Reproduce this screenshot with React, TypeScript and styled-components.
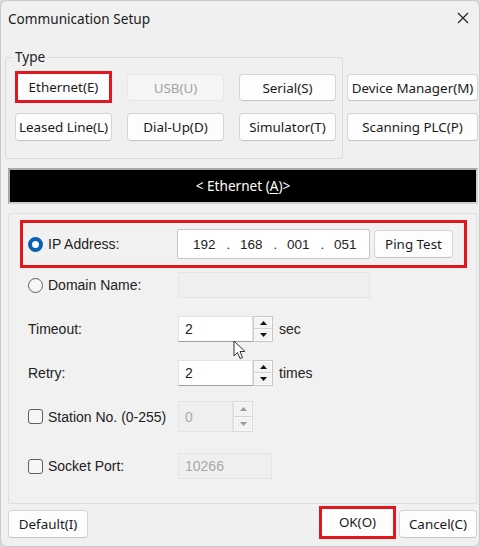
import React from "react";
import styled, { createGlobalStyle, css } from "styled-components";

const Global = createGlobalStyle`
  html, body { margin: 0; padding: 0; background: #d9d9d9; }
  body { width: 480px; height: 547px; overflow: hidden; }
  * { box-sizing: border-box; }
`;

const ui = `"Noto Sans", "Open Sans", sans-serif`;
const classic = `"Liberation Sans", Arial, sans-serif`;
const RED = "#e3161e";

const Window = styled.div`
  position: relative;
  width: 480px;
  height: 547px;
  background: #f0f0f0;
  border-radius: 7px;
  border: 1px solid #c9c9c9;
  display: flex;
  flex-direction: column;
  font-family: ${ui};
  color: #1a1a1a;
  overflow: hidden;
`;

const TitleBar = styled.div`
  height: 34px;
  display: flex;
  align-items: center;
  justify-content: space-between;
  padding: 0 6px 0 7px;
  font-size: 13.6px;
  color: #1b1b1b;
`;

const CloseBtn = styled.div`
  width: 20px;
  height: 20px;
  display: flex;
  align-items: center;
  justify-content: center;
`;

const TypeArea = styled.div`
  display: flex;
  align-items: flex-start;
  padding: 14px 0 0 4px;
  height: 124px;
`;

const GroupBox = styled.div`
  position: relative;
  width: 338px;
  height: 102px;
  margin-top: 8px;
  border: 1px solid #dcdcdc;
  border-radius: 3px;
  padding: 16px 0 0 9px;
  display: grid;
  grid-template-columns: 97px 97px 97px;
  grid-auto-rows: 27px;
  column-gap: 15px;
  row-gap: 12px;
`;

const GroupLegend = styled.span`
  position: absolute;
  top: -11px;
  left: 6px;
  padding: 0 3px;
  background: #f0f0f0;
  font-size: 13.6px;
  line-height: 20px;
  color: #222;
`;

const SideColumn = styled.div`
  display: flex;
  flex-direction: column;
  gap: 12px;
  margin: 25px 0 0 4px;
`;

const Button = styled.button<{ $w?: number; $h?: number; $hl?: boolean; $disabled?: boolean }>`
  width: ${(p) => (p.$w ? `${p.$w}px` : "100%")};
  height: ${(p) => p.$h ?? 27}px;
  padding: 0;
  background: #fdfdfd;
  border: 1px solid #d5d5d5;
  border-bottom-color: #c4c4c4;
  border-radius: 4px;
  font-family: ${ui};
  font-size: 13.4px;
  color: #1b1b1b;
  display: flex;
  align-items: center;
  justify-content: center;
  white-space: nowrap;
  ${(p) =>
    p.$disabled &&
    css`
      background: #f5f5f5;
      border-color: #e6e6e6;
      color: #a3a3a3;
    `}
  ${(p) =>
    p.$hl &&
    css`
      border: 3px solid ${RED};
      border-radius: 0;
      height: ${(p.$h ?? 27) + 5}px;
      margin-top: -3px;
    `}
`;

const Banner = styled.div`
  margin: 9px 1px 0 7px;
  height: 36px;
  background: #000;
  border: 2px solid #a8a8a8;
  border-right-color: #d0d0d0;
  border-bottom-color: #d0d0d0;
  display: flex;
  align-items: center;
  justify-content: center;
  color: #fff;
  font-size: 13.6px;
  padding-bottom: 1px;
`;

const Underline = styled.span`
  text-decoration: underline;
  text-underline-offset: 2px;
`;

const Panel = styled.div`
  margin: 9px 2px 0 7px;
  height: 291px;
  border: 1px solid #dedede;
  border-radius: 2px;
  background: #f1f1f1;
  padding: 6px 0 0 11px;
  display: flex;
  flex-direction: column;
`;

const HighlightRow = styled.div`
  width: 447px;
  height: 48px;
  border: 3px solid ${RED};
  display: flex;
  align-items: center;
  padding-left: 5px;
`;

const Row = styled.div<{ $top: number; $h?: number }>`
  display: flex;
  align-items: center;
  height: ${(p) => p.$h ?? 26}px;
  margin-top: ${(p) => p.$top}px;
  padding-left: 8px;
`;

const Label = styled.label<{ $w: number }>`
  width: ${(p) => p.$w}px;
  display: flex;
  align-items: center;
  gap: 5px;
  font-family: ${classic};
  font-size: 14px;
  color: #222;
  white-space: nowrap;
  flex-shrink: 0;
`;

const RadioMark = styled.span<{ $on?: boolean }>`
  width: 15px;
  height: 15px;
  border-radius: 50%;
  flex-shrink: 0;
  ${(p) =>
    p.$on
      ? css`
          border: 4px solid #0a5fb4;
          background: #fff;
        `
      : css`
          border: 1px solid #5f5f5f;
          background: #f6f6f6;
        `}
`;

const CheckMark = styled.span`
  width: 15px;
  height: 15px;
  border: 1px solid #5f5f5f;
  border-radius: 3px;
  background: #f6f6f6;
  flex-shrink: 0;
`;

const IpBox = styled.div`
  width: 193px;
  height: 30px;
  background: #fff;
  border: 1px solid #c4c4c4;
  border-radius: 2px;
  display: flex;
  align-items: center;
  padding-left: 15px;
  font-family: ${classic};
  font-size: 13.5px;
  color: #222;
`;

const Octet = styled.span`
  width: 26px;
  text-align: left;
`;

const Dot = styled.span`
  width: 21px;
  text-align: center;
  padding-right: 2px;
`;

const TextField = styled.div<{ $w: number; $h?: number; $disabled?: boolean }>`
  width: ${(p) => p.$w}px;
  height: ${(p) => p.$h ?? 26}px;
  background: ${(p) => (p.$disabled ? "#efefef" : "#fff")};
  border: 1px solid ${(p) => (p.$disabled ? "#e4e4e4" : "#e2e2e2")};
  border-bottom: 1px solid ${(p) => (p.$disabled ? "#e4e4e4" : "#a0a0a0")};
  display: flex;
  align-items: center;
  padding-left: 6px;
  font-family: ${classic};
  font-size: 14px;
  color: ${(p) => (p.$disabled ? "#a8a8a8" : "#222")};
  flex-shrink: 0;
`;

const Spinner = styled.div<{ $h: number; $disabled?: boolean }>`
  width: 20px;
  height: ${(p) => p.$h}px;
  display: flex;
  flex-direction: column;
  border: 1px solid ${(p) => (p.$disabled ? "#dcdcdc" : "#c8c8c8")};
  background: ${(p) => (p.$disabled ? "#f0f0f0" : "#ececec")};
  flex-shrink: 0;
`;

const SpinBtn = styled.div<{ $disabled?: boolean; $first?: boolean }>`
  flex: 1;
  display: flex;
  align-items: center;
  justify-content: center;
  background: ${(p) => (p.$disabled ? "#f2f2f2" : "#f3f3f3")};
  border: 1px solid ${(p) => (p.$disabled ? "#f8f8f8" : "#fbfbfb")};
  ${(p) => p.$first && css`border-bottom-color: #d0d0d0;`}
`;

const Unit = styled.span`
  margin-left: 6px;
  font-family: ${classic};
  font-size: 14px;
  color: #222;
`;

const Footer = styled.div`
  flex: 1;
  display: flex;
  align-items: center;
  padding: 0 2px 3px 7px;
`;

const Spacer = styled.div`
  flex: 1;
`;

const FooterRight = styled.div`
  display: flex;
  align-items: center;
  gap: 3px;
`;

const Cursor = styled.svg`
  position: absolute;
  left: 232px;
  top: 339px;
`;

function Tri({ up, color }: { up?: boolean; color: string }) {
  return (
    <svg width="7" height="4" viewBox="0 0 7 4">
      <path d={up ? "M0 4 L3.5 0 L7 4 Z" : "M0 0 L3.5 4 L7 0 Z"} fill={color} />
    </svg>
  );
}

function Spin({ h, disabled }: { h: number; disabled?: boolean }) {
  const c = disabled ? "#9a9a9a" : "#111";
  return (
    <Spinner $h={h} $disabled={disabled}>
      <SpinBtn $first $disabled={disabled}>
        <Tri up color={c} />
      </SpinBtn>
      <SpinBtn $disabled={disabled}>
        <Tri color={c} />
      </SpinBtn>
    </Spinner>
  );
}

export default function App() {
  return (
    <>
      <Global />
      <Window>
        <TitleBar>
          <span>Communication Setup</span>
          <CloseBtn>
            <svg width="12" height="12" viewBox="0 0 12 12">
              <path d="M1 1 L11 11 M11 1 L1 11" stroke="#222" strokeWidth="1.2" />
            </svg>
          </CloseBtn>
        </TitleBar>

        <TypeArea>
          <GroupBox>
            <GroupLegend>Type</GroupLegend>
            <Button $hl>Ethernet(E)</Button>
            <Button $disabled>USB(U)</Button>
            <Button>Serial(S)</Button>
            <Button $h={28}>Leased Line(L)</Button>
            <Button $h={28}>Dial-Up(D)</Button>
            <Button $h={28}>Simulator(T)</Button>
          </GroupBox>
          <SideColumn>
            <Button $w={131}>Device Manager(M)</Button>
            <Button $w={131} $h={28}>Scanning PLC(P)</Button>
          </SideColumn>
        </TypeArea>

        <Banner>
          &lt; Ethernet (<Underline>A</Underline>)&gt;
        </Banner>

        <Panel>
          <HighlightRow>
            <Label $w={149}>
              <RadioMark $on />
              IP Address:
            </Label>
            <IpBox>
              <Octet>192</Octet>
              <Dot>.</Dot>
              <Octet>168</Octet>
              <Dot>.</Dot>
              <Octet>001</Octet>
              <Dot>.</Dot>
              <Octet>051</Octet>
            </IpBox>
            <Button $w={79} $h={28} style={{ marginLeft: 4 }}>
              Ping Test
            </Button>
          </HighlightRow>

          <Row $top={4}>
            <Label $w={150}>
              <RadioMark />
              Domain Name:
            </Label>
            <TextField $w={192} $disabled />
          </Row>

          <Row $top={18}>
            <Label $w={150}>Timeout:</Label>
            <TextField $w={75}>2</TextField>
            <Spin h={26} />
            <Unit>sec</Unit>
          </Row>

          <Row $top={18}>
            <Label $w={150}>Retry:</Label>
            <TextField $w={75}>2</TextField>
            <Spin h={26} />
            <Unit>times</Unit>
          </Row>

          <Row $top={15} $h={31}>
            <Label $w={150}>
              <CheckMark />
              Station No. (0-255)
            </Label>
            <TextField $w={55} $h={31} $disabled>
              0
            </TextField>
            <Spin h={31} disabled />
          </Row>

          <Row $top={21}>
            <Label $w={150}>
              <CheckMark />
              Socket Port:
            </Label>
            <TextField $w={94} $disabled>
              10266
            </TextField>
          </Row>
        </Panel>

        <Footer>
          <Button $w={80} $h={28}>Default(I)</Button>
          <Spacer />
          <FooterRight>
            <Button $w={77} $h={28} $hl>OK(O)</Button>
            <Button $w={78} $h={28}>Cancel(C)</Button>
          </FooterRight>
        </Footer>

        <Cursor width="14" height="20" viewBox="0 0 14 20">
          <path
            d="M1 1 L1 16 L4.5 12.5 L7 18.5 L9.5 17.5 L7 11.5 L12 11.5 Z"
            fill="#fff"
            stroke="#333"
            strokeWidth="1"
            strokeLinejoin="round"
          />
        </Cursor>
      </Window>
    </>
  );
}
